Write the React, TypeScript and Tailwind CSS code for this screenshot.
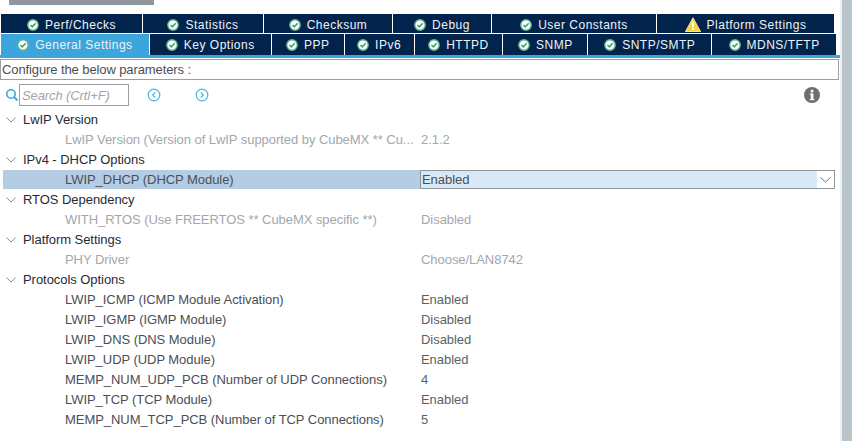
import React from 'react';

const labelFont = "font-['Liberation_Sans',Arial,sans-serif]";

const CheckBadge = () => (
    <svg width="12" height="12" viewBox="0 0 12 12" className="shrink-0">
        <circle cx="6" cy="6" r="5.2" fill="#ffffff" stroke="#5cb88a" strokeWidth="1.4" />
        <path d="M3.4 6 L5.3 7.9 L8.7 4.3" fill="none" stroke="#3f9f6e" strokeWidth="1.6" />
    </svg>
);

const WarnBadge = () => (
    <svg width="16" height="15" viewBox="0 0 16 15" className="shrink-0">
        <path d="M8 0.8 L15.5 14.5 L0.5 14.5 Z" fill="#f5d33f" stroke="#fbe88a" strokeWidth="1" strokeLinejoin="round" />
        <path d="M8 4.5 L8 10" stroke="#ffffff" strokeWidth="2" />
        <rect x="7" y="11" width="2" height="2" fill="#ffffff" />
    </svg>
);

type Tab = { label: string; width: string; warn?: boolean; active?: boolean };

const topTabs: Tab[] = [
    { label: 'Perf/Checks', width: 'w-[142px]' },
    { label: 'Statistics', width: 'w-[121px]' },
    { label: 'Checksum', width: 'w-[129px]' },
    { label: 'Debug', width: 'w-[99px]' },
    { label: 'User Constants', width: 'w-[165px]' },
    { label: 'Platform Settings', width: 'w-[177px]', warn: true },
];

const bottomTabs: Tab[] = [
    { label: 'General Settings', width: 'w-[149px]', active: true },
    { label: 'Key Options', width: 'w-[122px]' },
    { label: 'PPP', width: 'w-[73px]' },
    { label: 'IPv6', width: 'w-[70px]' },
    { label: 'HTTPD', width: 'w-[89px]' },
    { label: 'SNMP', width: 'w-[85px]' },
    { label: 'SNTP/SMTP', width: 'w-[124px]' },
    { label: 'MDNS/TFTP', width: 'w-[124px]' },
];

const TabRow = ({ tabs, height, pad }: { tabs: Tab[]; height: string; pad?: string }) => (
    <div className={`flex ${height}`}>
        {tabs.map((tab, i) => (
            <div
                key={tab.label}
                className={`${tab.width} ${pad ?? ''} ${tab.active ? 'bg-[#3aa6db]' : 'bg-[#02234b]'} ${i < tabs.length - 1 ? 'border-r border-white' : ''} flex items-center justify-center gap-[6px] text-[12px] tracking-[0.5px] text-[#eef3f8] ${labelFont}`}
            >
                {tab.warn ? <WarnBadge /> : <CheckBadge />}
                <span>{tab.label}</span>
            </div>
        ))}
    </div>
);

const Group = ({ label }: { label: string }) => (
    <div className={`flex h-5 items-center text-[13px] tracking-[-0.05px] text-[#1f2a38] ${labelFont}`}>
        <svg width="10" height="6" viewBox="0 0 10 6" className="ml-[6px] mr-[7px] shrink-0">
            <path d="M0.5 0.5 L5 5 L9.5 0.5" fill="none" stroke="#8a9299" strokeWidth="1" />
        </svg>
        <span>{label}</span>
    </div>
);

const Param = ({ label, value, muted }: { label: string; value: string; muted?: boolean }) => (
    <div className={`flex h-5 items-center text-[13px] tracking-[-0.05px] ${muted ? 'text-[#a3a7ab]' : 'text-[#4a4f57]'} ${labelFont}`}>
        <span className="w-[421px] shrink-0 whitespace-nowrap pl-[65px]">{label}</span>
        <span className={muted ? 'text-[#a3a7ab]' : 'text-[#5a5f66]'}>{value}</span>
    </div>
);

export default function App() {
    return (
        <div className="flex h-[441px] w-[852px] overflow-hidden bg-white">
            <div className="w-[840px] shrink-0">
                <div className="ml-[9px] h-[5px] w-[145px] bg-[#8f979e]" />
                <div className="mt-[9px] flex w-[835px] flex-col gap-px pl-[1px] box-content">
                    <TabRow tabs={topTabs} height="h-[19px]" pad="pt-[2px]" />
                    <TabRow tabs={bottomTabs} height="h-[21px]" />
                </div>
                <div className="h-[3px] w-[841px] bg-[#3aa6db]" />
                <div className={`mt-px flex h-[21px] w-[839px] items-center border border-[#9a9fa3] pl-[1px] text-[13px] tracking-[-0.1px] text-[#4a4f57] ${labelFont}`}>
                    Configure the below parameters :
                </div>

                <div className="mt-[4px] flex h-[22px] items-center">
                    <svg width="14" height="14" viewBox="0 0 14 14" className="ml-[5px] shrink-0">
                        <circle cx="6" cy="6" r="4.2" fill="none" stroke="#3aa6db" strokeWidth="1.6" />
                        <path d="M9 9 L12.5 12.5" stroke="#3aa6db" strokeWidth="1.8" />
                    </svg>
                    <div className={`h-[22px] w-[110px] border border-[#9a9fa3] pl-[2px] text-[13px] italic leading-[21px] tracking-[-0.1px] text-[#a3a7ab] ${labelFont}`}>
                        Search (Crtl+F)
                    </div>
                    <svg width="14" height="14" viewBox="0 0 14 14" className="ml-[18px] shrink-0">
                        <circle cx="7" cy="7" r="5.8" fill="none" stroke="#4db3e3" strokeWidth="1.2" />
                        <path d="M8.2 4.5 L5.7 7 L8.2 9.5" fill="none" stroke="#4db3e3" strokeWidth="1.2" />
                    </svg>
                    <svg width="14" height="14" viewBox="0 0 14 14" className="ml-[34px] shrink-0">
                        <circle cx="7" cy="7" r="5.8" fill="none" stroke="#4db3e3" strokeWidth="1.2" />
                        <path d="M5.8 4.5 L8.3 7 L5.8 9.5" fill="none" stroke="#4db3e3" strokeWidth="1.2" />
                    </svg>
                    <svg width="16" height="16" viewBox="0 0 16 16" className="ml-[595px] shrink-0">
                        <circle cx="8" cy="8" r="8" fill="#6d6e70" />
                        <rect x="6.8" y="2.8" width="2.6" height="2.6" fill="#ffffff" />
                        <path d="M5.8 6.6 H9.4 V12 H10.4 V13.2 H5.8 V12 H6.8 V7.8 H5.8 Z" fill="#ffffff" />
                    </svg>
                </div>

                <div className="mt-[4px]">
                    <Group label="LwIP Version" />
                    <Param muted label="LwIP Version (Version of LwIP supported by CubeMX ** Cu..." value="2.1.2" />
                    <Group label="IPv4 - DHCP Options" />
                    <div className={`ml-[3px] flex h-[19px] w-[832px] items-stretch text-[13px] tracking-[-0.05px] text-[#4a4f57] ${labelFont}`}>
                        <div className="flex w-[417px] items-center bg-[#b5cde4] pl-[62px]">LWIP_DHCP (DHCP Module)</div>
                        <div className="flex flex-1 items-center justify-between border border-[#8f979e] bg-[#d9e8f5] pl-[1px]">
                            <span>Enabled</span>
                            <span className="flex h-full w-[17px] items-center justify-center bg-white">
                                <svg width="11" height="6" viewBox="0 0 11 6">
                                    <path d="M0.5 0.5 L5.5 5 L10.5 0.5" fill="none" stroke="#6d7379" strokeWidth="1" />
                                </svg>
                            </span>
                        </div>
                    </div>
                    <div className="h-px" />
                    <Group label="RTOS Dependency" />
                    <Param muted label="WITH_RTOS (Use FREERTOS ** CubeMX specific **)" value="Disabled" />
                    <Group label="Platform Settings" />
                    <Param muted label="PHY Driver" value="Choose/LAN8742" />
                    <Group label="Protocols Options" />
                    <Param label="LWIP_ICMP (ICMP Module Activation)" value="Enabled" />
                    <Param label="LWIP_IGMP (IGMP Module)" value="Disabled" />
                    <Param label="LWIP_DNS (DNS Module)" value="Disabled" />
                    <Param label="LWIP_UDP (UDP Module)" value="Enabled" />
                    <Param label="MEMP_NUM_UDP_PCB (Number of UDP Connections)" value="4" />
                    <Param label="LWIP_TCP (TCP Module)" value="Enabled" />
                    <Param label="MEMP_NUM_TCP_PCB (Number of TCP Connections)" value="5" />
                </div>
            </div>
            <div className="w-[2px] shrink-0 bg-[#eef0f2]" />
            <div className="flex-1 bg-[#b9c4cb]" />
        </div>
    );
}
